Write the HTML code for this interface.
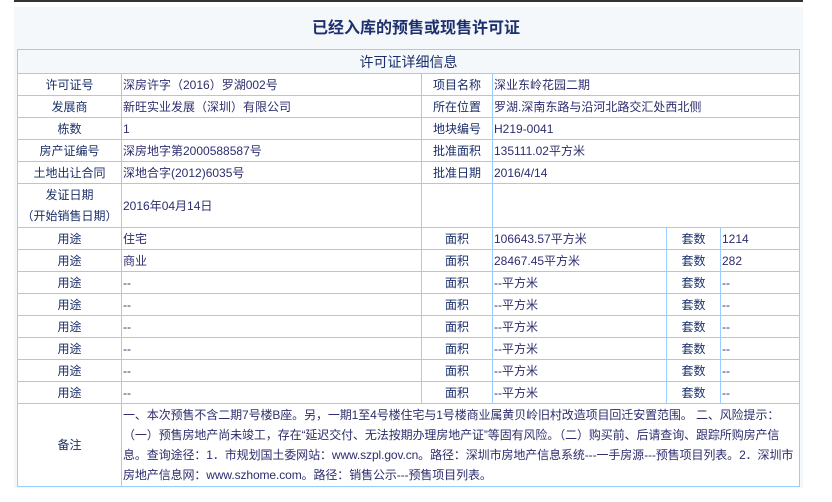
<!DOCTYPE html>
<html><head><meta charset="utf-8"><style>
body{margin:0;width:832px;height:502px;background:#fff;overflow:hidden;font-family:"Liberation Sans","Noto Sans CJK SC",sans-serif;}
.strip{position:absolute;left:14px;top:0;width:789px;height:2px;background:#333;}
.panel{position:absolute;left:14px;top:7px;width:789px;height:481px;background:#f5f8fb;}
h1{position:absolute;left:0;top:14px;width:832px;margin:0;text-align:center;font-size:16px;font-weight:bold;color:#1e2f6e;}
table{position:absolute;left:17px;top:49px;border-collapse:collapse;table-layout:fixed;font-size:12px;color:#1a2f6a;}
td{border:1px solid #99ccff;padding:0 1px;height:21px;line-height:16px;background:#fff;white-space:nowrap;overflow:hidden;}
td.l{text-align:center;}
.v{color:#2d2d6e;}
.hd{background:#f5f8fb;text-align:center;font-size:14px;height:23px;}
.note{white-space:normal;line-height:20px;padding:1px 1px 1px 1px;letter-spacing:-0.1px;}
</style></head><body>
<div class="strip"></div>
<div class="panel"></div>
<h1>已经入库的预售或现售许可证</h1>
<table>
<colgroup><col style="width:104px"><col style="width:300px"><col style="width:71px"><col style="width:174px"><col style="width:54px"><col style="width:79px"></colgroup>
<tr><td colspan="6" class="hd">许可证详细信息</td></tr>
<tr><td class="l">许可证号</td><td class="v">深房许字（2016）罗湖002号</td><td class="l">项目名称</td><td colspan="3" class="v">深业东岭花园二期</td></tr>
<tr><td class="l">发展商</td><td class="v">新旺实业发展（深圳）有限公司</td><td class="l">所在位置</td><td colspan="3" class="v">罗湖.深南东路与沿河北路交汇处西北侧</td></tr>
<tr><td class="l">栋数</td><td class="v">1</td><td class="l">地块编号</td><td colspan="3" class="v">H219-0041</td></tr>
<tr><td class="l">房产证编号</td><td class="v">深房地字第2000588587号</td><td class="l">批准面积</td><td colspan="3" class="v">135111.02平方米</td></tr>
<tr><td class="l">土地出让合同</td><td class="v">深地合字(2012)6035号</td><td class="l">批准日期</td><td colspan="3" class="v">2016/4/14</td></tr>
<tr><td class="l" style="height:43px;line-height:21px">发证日期<br>（开始销售日期）</td><td class="v">2016年04月14日</td><td></td><td colspan="3"></td></tr>
<tr><td class="l">用途</td><td class="v">住宅</td><td class="l">面积</td><td class="v">106643.57平方米</td><td class="l">套数</td><td class="v">1214</td></tr>
<tr><td class="l">用途</td><td class="v">商业</td><td class="l">面积</td><td class="v">28467.45平方米</td><td class="l">套数</td><td class="v">282</td></tr>
<tr><td class="l">用途</td><td class="v">--</td><td class="l">面积</td><td class="v">--平方米</td><td class="l">套数</td><td class="v">--</td></tr>
<tr><td class="l">用途</td><td class="v">--</td><td class="l">面积</td><td class="v">--平方米</td><td class="l">套数</td><td class="v">--</td></tr>
<tr><td class="l">用途</td><td class="v">--</td><td class="l">面积</td><td class="v">--平方米</td><td class="l">套数</td><td class="v">--</td></tr>
<tr><td class="l">用途</td><td class="v">--</td><td class="l">面积</td><td class="v">--平方米</td><td class="l">套数</td><td class="v">--</td></tr>
<tr><td class="l">用途</td><td class="v">--</td><td class="l">面积</td><td class="v">--平方米</td><td class="l">套数</td><td class="v">--</td></tr>
<tr><td class="l">用途</td><td class="v">--</td><td class="l">面积</td><td class="v">--平方米</td><td class="l">套数</td><td class="v">--</td></tr>
<tr><td class="l">备注</td><td colspan="5" class="v note">一、本次预售不含二期7号楼B座。另，一期1至4号楼住宅与1号楼商业属黄贝岭旧村改造项目回迁安置范围。 二、风险提示：（一）预售房地产尚未竣工，存在“延迟交付、无法按期办理房地产证”等固有风险。（二）购买前、后请查询、跟踪所购房产信息。查询途径：1．市规划国土委网站：www.szpl.gov.cn。路径：深圳市房地产信息系统---一手房源---预售项目列表。2．深圳市房地产信息网：www.szhome.com。路径：销售公示---预售项目列表。</td></tr>
</table>
</body></html>
